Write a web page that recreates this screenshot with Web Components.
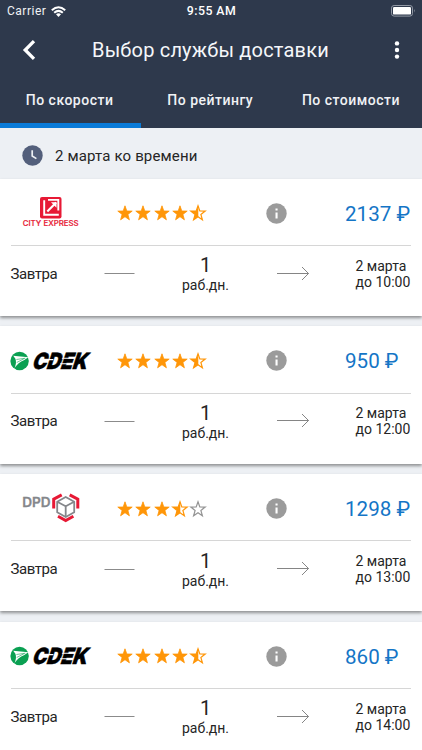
<!DOCTYPE html>
<html lang="ru"><head><meta charset="utf-8"><title>Выбор службы доставки</title>
<style>
html,body{margin:0;height:100%;overflow:hidden}
body{font-family:Roboto,"Liberation Sans",sans-serif;color:#252525;background:#edf0f4}
</style></head><body>
<delivery-screen></delivery-screen>
<script>
const define=(name,markup)=>customElements.define(name,class extends HTMLElement{
  connectedCallback(){
    if(this.shadowRoot)return;
    const t=document.createElement('template');
    t.innerHTML=typeof markup==='function'?markup(this):markup;
    this.attachShadow({mode:'open'}).append(t.content.cloneNode(true));
  }
});

define('status-bar',`<style>
:host{display:grid;grid-template-columns:1fr auto 1fr;align-items:center;height:22px;padding:0 6px 0 7px;color:#f0f2f5;font:12px/22px Roboto,sans-serif}
.l{display:flex;align-items:center;gap:5px;letter-spacing:.5px}
.t{font:500 12.3px/22px Roboto,sans-serif;letter-spacing:.45px;color:#fff}
.b{justify-self:end;display:block}svg{display:block}
</style>
<div class="l"><span>Carrier</span><svg width="15" height="11" viewBox="0 0 15 11"><g fill="none" stroke="#fff" stroke-width="2"><path d="M.8 4.2Q7.5-1.8 14.2 4.2"/><path d="M3.2 6.8Q7.5 3 11.8 6.8"/></g><path d="M5 8.3Q7.5 6.3 10 8.3L7.5 11Z" fill="#fff"/></svg></div>
<div class="t">9:55 AM</div>
<svg class="b" width="25" height="12" viewBox="0 0 25 12"><rect x=".5" y=".5" width="21" height="10.6" rx="2.6" fill="none" stroke="#9299a5"/><rect x="2" y="2" width="18" height="7.6" rx="1.2" fill="#fff"/><path d="M23 4q1.5 1.8 0 3.6z" fill="#9299a5"/></svg>`);

define('app-bar',`<style>
:host{display:flex;align-items:center;height:56px;padding:0 22px;box-sizing:border-box;color:#f5f7fa}
h1{flex:1;margin:0 0 0 56px;font:400 20px/56px Roboto,sans-serif;letter-spacing:.18px;white-space:nowrap}
svg{display:block}
</style>
<svg width="14" height="20" viewBox="0 0 14 20"><path d="M12 1.2 3.2 10 12 18.8" fill="none" stroke="#fff" stroke-width="3.3"/></svg>
<h1><slot></slot></h1>
<svg width="6" height="18" viewBox="0 0 6 18" fill="#fff"><circle cx="3" cy="2.4" r="2.2"/><circle cx="3" cy="9" r="2.2"/><circle cx="3" cy="15.6" r="2.2"/></svg>`);

define('tab-item',`<style>
:host{display:block;flex:1;height:50px;box-sizing:border-box;text-align:center;font:500 14px/45px Roboto,sans-serif;letter-spacing:.5px;color:#f0f2f5;white-space:nowrap;border-bottom:5px solid transparent}
:host([active]){border-color:#0a7bd8}
span{margin-right:1.5px}
</style><span><slot></slot></span>`);

define('tab-strip',`<style>:host{display:flex;height:50px}</style><slot></slot>`);

define('date-heading',`<style>
:host{display:flex;align-items:center;gap:12px;height:50.5px;padding:5px 22px 0;box-sizing:border-box;font-size:15px;letter-spacing:.15px}
svg{display:block}</style>
<svg width="21" height="21" viewBox="0 0 21 21"><circle cx="10.5" cy="10.5" r="10.2" fill="#535f7b"/><path d="M10.2 5.2V11l4.2 2.6" fill="none" stroke="#edf0f4" stroke-width="1.7"/></svg>
<span><slot></slot></span>`);

const star='M9 1.8 10.8 7 16.2 7.1 11.9 10.4 13.4 15.8 9 12.7 4.6 15.8 6.1 10.4 1.8 7.1 7.2 7Z';
define('star-rating',el=>{
  const v=+el.getAttribute('value');let s='';
  for(let i=0;i<5;i++){
    const f=v-i;
    s+=`<svg width="18.3" height="18" viewBox="0 0 18.3 18">`+(f>=1?`<path d="${star}" fill="#ff9608" stroke="#ff9608" stroke-width=".8"/>`:
      `<path d="${star}" fill="none" stroke="${f>0?'#ff9608':'#949494'}" stroke-width="1.2"/>`+(f>0?`<path d="M9.3 1.8V12.7L4.6 15.8 6.1 10.4 1.8 7.1 7.2 7Z" fill="#ff9608"/>`:''))+`</svg>`;
  }
  return `<style>:host{display:flex;margin-left:-1px}svg{display:block;flex:none}</style>${s}`;
});

const logos={
city:`<svg width="84" height="40" viewBox="0 0 84 40"><rect x="29" y="4" width="21.5" height="21.5" rx="2" fill="#e71935"/><path d="M33.2 7.2V21.8H47.8" fill="none" stroke="#fff" stroke-width="1.9"/><path d="M37 6.9H47.3V17.5" fill="none" stroke="#fff" stroke-width="1.9"/><path d="M36.3 18.6 45.2 9.5" fill="none" stroke="#fff" stroke-width="2.1"/><path d="M40 9.3h5.5v5.5z" fill="#fff"/><text x="11.7" y="33.2" font-family="Inter,sans-serif" font-size="7.6" font-weight="500" fill="#e71935" stroke="#e71935" stroke-width=".2" textLength="56" lengthAdjust="spacingAndGlyphs">CITY EXPRESS</text></svg>`,
cdek:`<svg width="84" height="40" viewBox="0 0 84 40"><circle cx="8.6" cy="20" r="9.2" fill="#0aa052"/><path d="M2.2 14.8 17.4 16.2 12.9 19.2Q7.2 21.5 3.6 27 5.9 21.5 4.4 17.8Z" fill="#fff"/><path d="M5.4 18.5 14.4 17.2M5.7 21.5 13.4 17.5" stroke="#0aa052" stroke-width=".6"/><g transform="translate(20.2 28.2) skewX(-18)"><text x="0" y="0" font-family="Inter,sans-serif" font-size="22.5" font-weight="900" stroke="#000" stroke-width=".5" textLength="55" lengthAdjust="spacingAndGlyphs">CDEK</text><path d="M27.2 -10.9H40M27.2 -5.4H40M13.2 -9.6H19" stroke="#fff" stroke-width="1.1"/></g></svg>`,
dpd:`<svg width="84" height="40" viewBox="0 0 84 40"><text x="11.2" y="18.4" font-family="Inter,sans-serif" font-size="13" font-weight="600" fill="#85878b" stroke="#85878b" stroke-width=".3" textLength="28.4" lengthAdjust="spacingAndGlyphs">DPD</text><g transform="translate(0 -1)"><g fill="none" stroke="#85878b" stroke-width="1.8" stroke-linejoin="round"><path d="M54.7 9 63.2 13.7V24.2L54.7 29 46.2 24.2V13.7Z"/><path d="M46.2 13.7 54.7 18.2 63.2 13.7M54.7 18.2V29"/></g><g fill="none" stroke="#e71935" stroke-width="3"><path d="M42.7 20.5V11.2L50.7 6.9M58.7 6.9 66.8 11.2V20.5M47 28.3 54.7 32.6 62.4 28.3"/></g></g></svg>`};
define('carrier-logo',el=>`<style>:host,svg{display:block}svg{overflow:visible}</style>${logos[el.getAttribute('name')]}`);

define('offer-card',el=>`<style>
:host{display:block;height:137.4px;margin-bottom:10.3px;box-sizing:border-box;padding:0 11px;background:#fff;box-shadow:0 2px 3px #0006}
.top{display:grid;grid-template-columns:106px 148px 80px 1fr;align-items:center;height:67.5px;padding-top:3px;box-sizing:border-box;border-bottom:1px solid #d6d6d6}
.price{font-size:20.6px;color:#1475c6;white-space:nowrap;padding-top:1px}
.route{display:grid;grid-template-columns:93px 77px 49px 80px 46px 1fr;align-items:center;height:55.6px}
.when{font-size:15px;letter-spacing:-.4px;margin-left:-.6px}
.days{text-align:center;font-size:14px;line-height:16px}
.days b{display:block;font:400 20px/23px Roboto,sans-serif}
.arr{justify-self:end}
.due{font-size:14px;line-height:16px;white-space:nowrap;margin-left:-.5px}
svg{display:block}
</style>
<div class="top"><carrier-logo name="${el.getAttribute('carrier')}"></carrier-logo><star-rating value="${el.getAttribute('rating')}"></star-rating>
<svg width="21" height="21" viewBox="0 0 21 21" style="margin-left:1px"><circle cx="10.5" cy="10.5" r="10.2" fill="#9b9b9b"/><path d="M9.5 5.4h2.1v2.1H9.5zM9.5 9.4h2.1v6.1H9.5z" fill="#fff"/></svg>
<div class="price">${el.getAttribute('price')} ₽</div></div>
<div class="route"><span class="when">Завтра</span><svg width="31" height="3" viewBox="0 0 31 3"><path d="M.5 1.5H30.5" stroke="#8b8b8b"/></svg>
<div class="days"><b>1</b>раб.дн.</div>
<svg class="arr" width="33" height="16" viewBox="0 0 33 16"><path d="M0 7.5H31.5M25 1 31.5 7.5 25 14" fill="none" stroke="#777" stroke-width=".9"/></svg><span></span>
<div class="due">2 марта<br>до ${el.getAttribute('until')}</div></div>`);

define('delivery-screen',`<style>
:host{display:block;height:750px;overflow:hidden;background:#edf0f4}
header{background:#2e394c}
</style>
<header><status-bar></status-bar><app-bar>Выбор службы доставки</app-bar>
<tab-strip><tab-item active>По скорости</tab-item><tab-item>По рейтингу</tab-item><tab-item>По стоимости</tab-item></tab-strip></header>
<date-heading>2 марта ко времени</date-heading>
<main><offer-card carrier="city" rating="4.5" price="2137" until="10:00"></offer-card>
<offer-card carrier="cdek" rating="4.5" price="950" until="12:00"></offer-card>
<offer-card carrier="dpd" rating="3.5" price="1298" until="13:00"></offer-card>
<offer-card carrier="cdek" rating="4.5" price="860" until="14:00"></offer-card></main>`);
</script></body></html>
